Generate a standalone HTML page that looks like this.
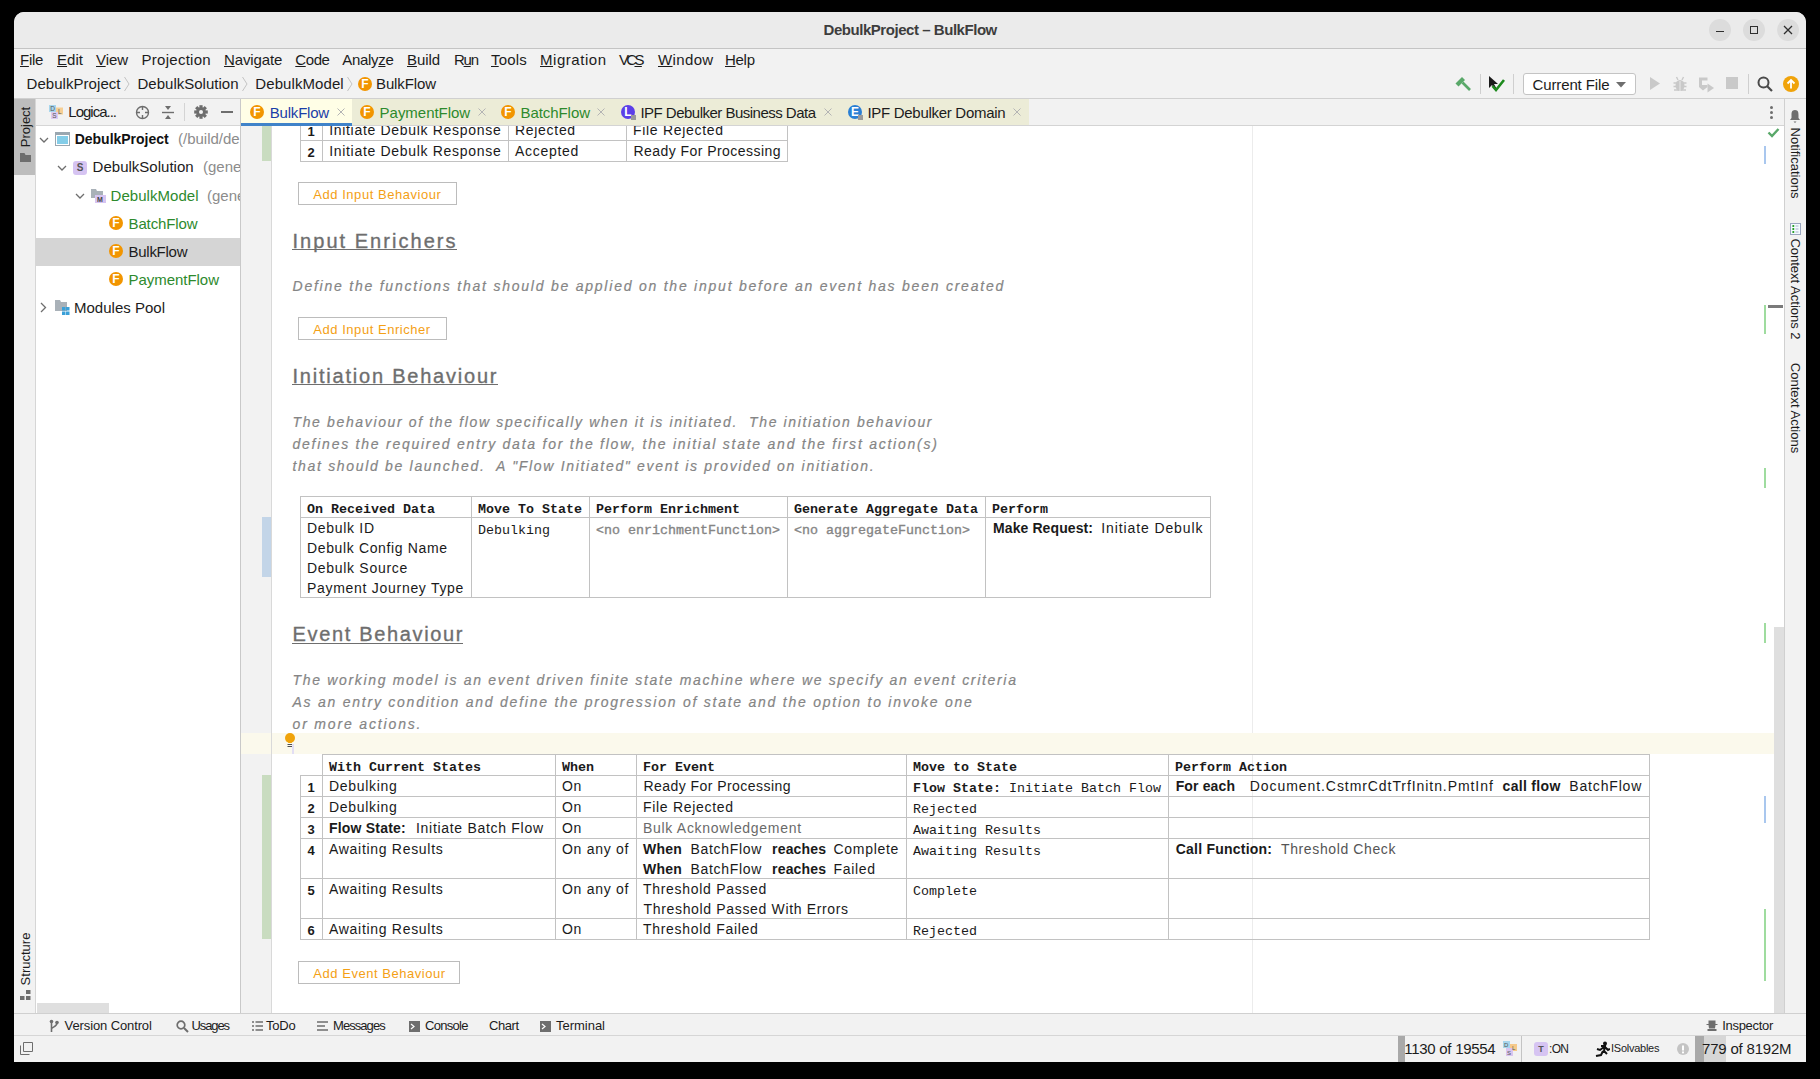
<!DOCTYPE html>
<html><head><meta charset="utf-8"><title>DebulkProject – BulkFlow</title>
<style>
html,body{margin:0;padding:0;background:#000;width:1820px;height:1079px;overflow:hidden}
body{position:relative;font-family:'Liberation Sans',sans-serif}
body>div,body>svg{position:absolute}
.t{white-space:pre;line-height:1}
u{text-decoration:underline;text-underline-offset:1px;text-decoration-thickness:1px}
</style></head><body>
<div style="left:14px;top:12px;width:1792px;height:1050px;background:#f2f2f2;border-radius:10px 10px 0 0;overflow:hidden"></div>
<div style="left:14px;top:12px;width:1792px;height:36px;background:#ebebeb;border-radius:10px 10px 0 0"></div>
<div style="left:14px;top:48px;width:1792px;height:1px;background:#c4c4c4;"></div>
<div class="t" style="left:823.5px;top:22.30px;font-size:15px;color:#3d3d3d;font-weight:700;font-style:normal;font-family:'Liberation Sans', sans-serif;letter-spacing:-0.453px;">DebulkProject – BulkFlow</div>
<div style="left:1709px;top:19px;width:22px;height:22px;border-radius:50%;background:#dcdcdc"></div>
<div style="left:1743px;top:19px;width:22px;height:22px;border-radius:50%;background:#dcdcdc"></div>
<div style="left:1777px;top:19px;width:22px;height:22px;border-radius:50%;background:#dcdcdc"></div>
<div style="left:1716px;top:31px;width:8px;height:1.2px;background:#2e2e2e;"></div>
<div style="left:1750px;top:26px;width:6px;height:6px;border:1.3px solid #2e2e2e"></div>
<svg style="left:1783px;top:25px" width="10" height="10"><path d="M1 1L9 9M9 1L1 9" stroke="#2e2e2e" stroke-width="1.3"/></svg>
<div class="t" style="left:20px;top:51.80px;font-size:15px;color:#1c1c1c;font-weight:400;font-style:normal;font-family:'Liberation Sans', sans-serif;letter-spacing:-0.296px;"><u>F</u>ile</div>
<div class="t" style="left:57px;top:51.80px;font-size:15px;color:#1c1c1c;font-weight:400;font-style:normal;font-family:'Liberation Sans', sans-serif;letter-spacing:0.047px;"><u>E</u>dit</div>
<div class="t" style="left:96px;top:51.80px;font-size:15px;color:#1c1c1c;font-weight:400;font-style:normal;font-family:'Liberation Sans', sans-serif;letter-spacing:-0.083px;"><u>V</u>iew</div>
<div class="t" style="left:141.5px;top:51.80px;font-size:15px;color:#1c1c1c;font-weight:400;font-style:normal;font-family:'Liberation Sans', sans-serif;letter-spacing:0.277px;">Projection</div>
<div class="t" style="left:224px;top:51.80px;font-size:15px;color:#1c1c1c;font-weight:400;font-style:normal;font-family:'Liberation Sans', sans-serif;letter-spacing:-0.117px;"><u>N</u>avigate</div>
<div class="t" style="left:295.3px;top:51.80px;font-size:15px;color:#1c1c1c;font-weight:400;font-style:normal;font-family:'Liberation Sans', sans-serif;letter-spacing:-0.425px;"><u>C</u>ode</div>
<div class="t" style="left:342.3px;top:51.80px;font-size:15px;color:#1c1c1c;font-weight:400;font-style:normal;font-family:'Liberation Sans', sans-serif;letter-spacing:-0.312px;">Analy<u>z</u>e</div>
<div class="t" style="left:407px;top:51.80px;font-size:15px;color:#1c1c1c;font-weight:400;font-style:normal;font-family:'Liberation Sans', sans-serif;letter-spacing:-0.094px;"><u>B</u>uild</div>
<div class="t" style="left:454px;top:51.80px;font-size:15px;color:#1c1c1c;font-weight:400;font-style:normal;font-family:'Liberation Sans', sans-serif;letter-spacing:-1.266px;">R<u>u</u>n</div>
<div class="t" style="left:491px;top:51.80px;font-size:15px;color:#1c1c1c;font-weight:400;font-style:normal;font-family:'Liberation Sans', sans-serif;letter-spacing:0.192px;"><u>T</u>ools</div>
<div class="t" style="left:540px;top:51.80px;font-size:15px;color:#1c1c1c;font-weight:400;font-style:normal;font-family:'Liberation Sans', sans-serif;letter-spacing:0.537px;"><u>M</u>igration</div>
<div class="t" style="left:619px;top:51.80px;font-size:15px;color:#1c1c1c;font-weight:400;font-style:normal;font-family:'Liberation Sans', sans-serif;letter-spacing:-2.68px;">VC<u>S</u></div>
<div class="t" style="left:658px;top:51.80px;font-size:15px;color:#1c1c1c;font-weight:400;font-style:normal;font-family:'Liberation Sans', sans-serif;letter-spacing:0.365px;"><u>W</u>indow</div>
<div class="t" style="left:725px;top:51.80px;font-size:15px;color:#1c1c1c;font-weight:400;font-style:normal;font-family:'Liberation Sans', sans-serif;letter-spacing:-0.292px;"><u>H</u>elp</div>
<div class="t" style="left:26.5px;top:75.80px;font-size:15px;color:#1c1c1c;font-weight:400;font-style:normal;font-family:'Liberation Sans', sans-serif;letter-spacing:0.051px;">DebulkProject</div>
<div class="t" style="left:137.5px;top:75.80px;font-size:15px;color:#1c1c1c;font-weight:400;font-style:normal;font-family:'Liberation Sans', sans-serif;letter-spacing:0.007px;">DebulkSolution</div>
<div class="t" style="left:255.3px;top:75.80px;font-size:15px;color:#1c1c1c;font-weight:400;font-style:normal;font-family:'Liberation Sans', sans-serif;letter-spacing:0.085px;">DebulkModel</div>
<div class="t" style="left:376px;top:75.80px;font-size:15px;color:#1c1c1c;font-weight:400;font-style:normal;font-family:'Liberation Sans', sans-serif;letter-spacing:-0.123px;">BulkFlow</div>
<svg style="left:123px;top:76px" width="8" height="16"><path d="M1.5 1L6 8L1.5 15" stroke="#c4c4c4" stroke-width="1" fill="none"/></svg>
<svg style="left:241px;top:76px" width="8" height="16"><path d="M1.5 1L6 8L1.5 15" stroke="#c4c4c4" stroke-width="1" fill="none"/></svg>
<svg style="left:346px;top:76px" width="8" height="16"><path d="M1.5 1L6 8L1.5 15" stroke="#c4c4c4" stroke-width="1" fill="none"/></svg>
<div style="left:358px;top:77px;width:14px;height:14px;border-radius:50%;background:#f29500"></div>
<div class="t" style="left:358px;top:77px;width:14px;height:14px;line-height:14px;text-align:center;color:#fff;font-weight:700;font-size:12px;font-family:'Liberation Sans', sans-serif">F</div>
<svg style="left:1454px;top:75px" width="18" height="17"><path d="M1.5 8.5L8 2L11 5L4.5 11.5Z" fill="#59a869"/><path d="M8.5 7.5L16 15" stroke="#59a869" stroke-width="2.6"/></svg>
<div style="left:1480px;top:74px;width:1px;height:20px;background:#cfcfcf;"></div>
<svg style="left:1488px;top:75px" width="18" height="18"><path d="M1 1L1 13L4 10L6.5 14.5L8.5 13.5L6 9L10 9Z" fill="#1a1a1a"/><path d="M4.5 11L8 15L16 5" stroke="#1d8a1d" stroke-width="2.6" fill="none"/></svg>
<div style="left:1513px;top:74px;width:1px;height:20px;background:#cfcfcf;"></div>
<div style="left:1523px;top:73px;width:111px;height:20px;border:1px solid #c4c4c4;border-radius:3px;background:#fff"></div>
<div class="t" style="left:1532.5px;top:76.80px;font-size:15px;color:#1c1c1c;font-weight:400;font-style:normal;font-family:'Liberation Sans', sans-serif;letter-spacing:-0.124px;">Current File</div>
<svg style="left:1616px;top:82px" width="10" height="6"><path d="M0 0L10 0L5 5.5Z" fill="#6e6e6e"/></svg>
<svg style="left:1649px;top:76px" width="12" height="15"><path d="M1 1L11 7.5L1 14Z" fill="#c9c9c9"/></svg>
<svg style="left:1672px;top:76px" width="16" height="16"><ellipse cx="8" cy="9.5" rx="4.5" ry="5.5" fill="#c9c9c9"/><path d="M1.5 7H14.5M1.5 10.5H14.5M2 14H14M4.5 1L6 4M11.5 1L10 4" stroke="#c9c9c9" stroke-width="1.4"/><path d="M8 5V15" stroke="#f2f2f2" stroke-width="0.8"/></svg>
<svg style="left:1698px;top:76px" width="17" height="18"><path d="M1 1.5H9.5V4.5H4V9H9.5V11L5 14.5L1 11Z" fill="#c9c9c9"/><path d="M9.5 7.5L16 12L9.5 16.5Z" fill="#c9c9c9"/></svg>
<div style="left:1726px;top:77px;width:12px;height:12px;background:#c9c9c9;"></div>
<div style="left:1748px;top:74px;width:1px;height:20px;background:#cfcfcf;"></div>
<svg style="left:1757px;top:76px" width="16" height="16"><circle cx="6.5" cy="6.5" r="5" stroke="#4a4a4a" stroke-width="2" fill="none"/><path d="M10 10L15 15" stroke="#4a4a4a" stroke-width="2.2"/></svg>
<svg style="left:1783px;top:76px" width="16" height="16"><circle cx="8" cy="8" r="8" fill="#f0a30a"/><path d="M8 12.5L8 4M4.5 7.5L8 4L11.5 7.5" stroke="#fff" stroke-width="1.8" fill="none"/></svg>
<div style="left:14px;top:98px;width:1792px;height:1px;background:#d0d0d0;"></div>
<div style="left:14px;top:99px;width:21px;height:76px;background:#bdbdbd;"></div>
<div style="left:35px;top:99px;width:1px;height:914px;background:#d6d6d6;"></div>
<div class="t" style="left:25.5px;top:126.6px;width:0;height:0"><div style="position:absolute;left:0;top:0;transform:translate(-50%,-50%) rotate(-90deg);font-size:13px;line-height:16px;color:#1c1c1c;white-space:pre">Project</div></div>
<svg style="left:20px;top:153px" width="11" height="9"><path d="M0 0L4.5 0L5.5 2L11 2L11 9L0 9Z" fill="#6e6e6e"/></svg>
<div class="t" style="left:25.5px;top:958.6px;width:0;height:0"><div style="position:absolute;left:0;top:0;transform:translate(-50%,-50%) rotate(-90deg);font-size:13px;line-height:16px;color:#1c1c1c;white-space:pre">Structure</div></div>
<svg style="left:20px;top:990px" width="11" height="10"><rect x="6" y="0" width="4.5" height="4" fill="#6e6e6e"/><rect x="0" y="6" width="4.5" height="4" fill="#6e6e6e"/><rect x="6" y="6" width="4.5" height="4" fill="#6e6e6e"/></svg>
<div style="left:36px;top:99px;width:204px;height:914px;background:#ffffff;"></div>
<div style="left:36px;top:99px;width:204px;height:26px;background:#f2f2f2;"></div>
<div style="left:36px;top:125px;width:204px;height:1px;background:#d6d6d6;"></div>
<div style="left:240px;top:99px;width:1px;height:914px;background:#c9c9c9;"></div>
<svg style="left:49px;top:105px" width="15" height="15"><rect x="0" y="0" width="7" height="7" fill="#a8d6ec"/><rect x="7" y="2.5" width="7" height="7" fill="#f6cf95"/><rect x="2" y="7" width="7" height="7" fill="#dccbf2"/><text x="1.2" y="6.3" font-size="6.5" fill="#555" font-family="Liberation Sans">D</text><text x="9" y="8.5" font-size="6.5" fill="#555" font-family="Liberation Sans">L</text><text x="3.3" y="13.3" font-size="6.5" fill="#555" font-family="Liberation Sans">S</text></svg>
<div class="t" style="left:68.3px;top:104.30px;font-size:15px;color:#1c1c1c;font-weight:400;font-style:normal;font-family:'Liberation Sans', sans-serif;letter-spacing:-1.002px;">Logica...</div>
<svg style="left:135px;top:105px" width="15" height="15"><circle cx="7.5" cy="7.5" r="6" stroke="#6e6e6e" stroke-width="1.4" fill="none"/><path d="M7.5 1V5M7.5 10V14M1 7.5H5M10 7.5H14" stroke="#6e6e6e" stroke-width="1.4"/></svg>
<svg style="left:161px;top:105px" width="14" height="15"><path d="M1 7.5H13" stroke="#6e6e6e" stroke-width="1.4"/><path d="M4 1H10L7 5Z M4 14H10L7 10Z" fill="#6e6e6e"/></svg>
<div style="left:184px;top:103px;width:1px;height:18px;background:#d4d4d4;"></div>
<svg style="left:194px;top:105px" width="14" height="14"><g fill="#6e6e6e" transform="translate(7 7)"><circle r="4.8"/><rect x="-1.6" y="-6.8" width="3.2" height="13.6"/><rect x="-6.8" y="-1.6" width="13.6" height="3.2"/><rect x="-1.6" y="-6.8" width="3.2" height="13.6" transform="rotate(45)"/><rect x="-6.8" y="-1.6" width="13.6" height="3.2" transform="rotate(45)"/></g><circle cx="7" cy="7" r="2" fill="#f2f2f2"/></svg>
<div style="left:221px;top:111px;width:12px;height:2px;background:#6e6e6e;"></div>
<div style="left:36px;top:238px;width:204px;height:28px;background:#d5d5d5;"></div>
<svg style="left:39px;top:137px" width="10" height="7"><path d="M1 1L5 5L9 1" stroke="#6e6e6e" stroke-width="1.3" fill="none"/></svg>
<svg style="left:55px;top:132px" width="15" height="14"><rect x="0.5" y="0.5" width="14" height="13" fill="#fff" stroke="#9aa7b0"/><rect x="1" y="1" width="13" height="2" fill="#9aa7b0"/><rect x="2" y="4" width="11" height="8" fill="#84cde8"/></svg>
<div class="t" style="left:74.7px;top:131.65px;font-size:14px;color:#111111;font-weight:700;font-style:normal;font-family:'Liberation Sans', sans-serif;letter-spacing:-0.012px;">DebulkProject</div>
<div class="t" style="left:178px;top:131.30px;font-size:15px;color:#8c8c8c;font-weight:400;font-style:normal;font-family:'Liberation Sans', sans-serif;letter-spacing:0px;">(/build/de</div>
<svg style="left:57px;top:165px" width="10" height="7"><path d="M1 1L5 5L9 1" stroke="#6e6e6e" stroke-width="1.3" fill="none"/></svg>
<div style="left:73px;top:161px;width:14px;height:14px;border-radius:3px;background:#d6c4f2"></div>
<div class="t" style="left:73px;top:161px;width:14px;height:14px;line-height:14px;text-align:center;font-size:10px;color:#555;font-weight:700">S</div>
<div class="t" style="left:92.6px;top:159.30px;font-size:15px;color:#1c1c1c;font-weight:400;font-style:normal;font-family:'Liberation Sans', sans-serif;letter-spacing:0.007px;">DebulkSolution</div>
<div class="t" style="left:203px;top:159.30px;font-size:15px;color:#8c8c8c;font-weight:400;font-style:normal;font-family:'Liberation Sans', sans-serif;letter-spacing:0px;">(gene</div>
<svg style="left:75px;top:193px" width="10" height="7"><path d="M1 1L5 5L9 1" stroke="#6e6e6e" stroke-width="1.3" fill="none"/></svg>
<svg style="left:91px;top:189px" width="15" height="14"><path d="M0 0H5L6 2H12V9H0Z" fill="#a9b1b8"/><rect x="4" y="6" width="11" height="8" fill="#d6c4f2"/><text x="6" y="13" font-size="7" fill="#444" font-family="Liberation Sans" font-weight="bold">M</text></svg>
<div class="t" style="left:110.5px;top:187.80px;font-size:15px;color:#2d8a2d;font-weight:400;font-style:normal;font-family:'Liberation Sans', sans-serif;letter-spacing:0.045px;">DebulkModel</div>
<div class="t" style="left:207px;top:187.80px;font-size:15px;color:#8c8c8c;font-weight:400;font-style:normal;font-family:'Liberation Sans', sans-serif;letter-spacing:0px;">(gene</div>
<div style="left:109px;top:216px;width:14px;height:14px;border-radius:50%;background:#f29500"></div>
<div class="t" style="left:109px;top:216px;width:14px;height:14px;line-height:14px;text-align:center;color:#fff;font-weight:700;font-size:12px;font-family:'Liberation Sans', sans-serif">F</div>
<div class="t" style="left:128.5px;top:215.80px;font-size:15px;color:#2d8a2d;font-weight:400;font-style:normal;font-family:'Liberation Sans', sans-serif;letter-spacing:-0.129px;">BatchFlow</div>
<div style="left:109px;top:244px;width:14px;height:14px;border-radius:50%;background:#f29500"></div>
<div class="t" style="left:109px;top:244px;width:14px;height:14px;line-height:14px;text-align:center;color:#fff;font-weight:700;font-size:12px;font-family:'Liberation Sans', sans-serif">F</div>
<div class="t" style="left:128.5px;top:243.80px;font-size:15px;color:#1c1c1c;font-weight:400;font-style:normal;font-family:'Liberation Sans', sans-serif;letter-spacing:-0.266px;">BulkFlow</div>
<div style="left:109px;top:272px;width:14px;height:14px;border-radius:50%;background:#f29500"></div>
<div class="t" style="left:109px;top:272px;width:14px;height:14px;line-height:14px;text-align:center;color:#fff;font-weight:700;font-size:12px;font-family:'Liberation Sans', sans-serif">F</div>
<div class="t" style="left:128.5px;top:271.80px;font-size:15px;color:#2d8a2d;font-weight:400;font-style:normal;font-family:'Liberation Sans', sans-serif;letter-spacing:-0.037px;">PaymentFlow</div>
<svg style="left:40px;top:302px" width="7" height="11"><path d="M1 1L5.5 5.5L1 10" stroke="#6e6e6e" stroke-width="1.3" fill="none"/></svg>
<svg style="left:55px;top:300px" width="15" height="16"><path d="M0 0H5L6 2H12V11H0Z" fill="#a9b1b8"/><rect x="7" y="7" width="3.5" height="3.5" fill="#3aa0d8"/><rect x="11" y="7" width="3.5" height="3.5" fill="#3aa0d8"/><rect x="7" y="11.5" width="3.5" height="3.5" fill="#3aa0d8"/><rect x="11" y="11.5" width="3.5" height="3.5" fill="#3aa0d8"/></svg>
<div class="t" style="left:74px;top:300.30px;font-size:15px;color:#1c1c1c;font-weight:400;font-style:normal;font-family:'Liberation Sans', sans-serif;letter-spacing:0.01px;">Modules Pool</div>
<div style="left:37px;top:1003px;width:72px;height:10px;background:#dfdfdf;"></div>
<div style="left:240px;top:126px;width:1px;height:887px;background:#c9c9c9;"></div>
<div style="left:241px;top:126px;width:30px;height:887px;background:#f2f2f2;"></div>
<div style="left:271px;top:126px;width:1px;height:887px;background:#d9d9d9;"></div>
<div style="left:262px;top:126px;width:9px;height:35px;background:#c9dcc0;"></div>
<div style="left:262px;top:517px;width:9px;height:60px;background:#c3d5e8;"></div>
<div style="left:262px;top:775px;width:9px;height:164px;background:#c9dcc0;"></div>
<div style="left:272px;top:126px;width:1512px;height:887px;background:#ffffff;"></div>
<div style="left:1252px;top:126px;width:1px;height:887px;background:#ececec;"></div>
<div style="left:241px;top:733px;width:30px;height:21px;background:#fbf9ec;"></div>
<div style="left:272px;top:733px;width:1512px;height:21px;background:#fbf9ec;"></div>
<div style="left:300px;top:118px;width:1px;height:44px;background:#c2c2c2;"></div>
<div style="left:322px;top:118px;width:1px;height:44px;background:#c2c2c2;"></div>
<div style="left:508px;top:118px;width:1px;height:44px;background:#c2c2c2;"></div>
<div style="left:626px;top:118px;width:1px;height:44px;background:#c2c2c2;"></div>
<div style="left:787px;top:118px;width:1px;height:44px;background:#c2c2c2;"></div>
<div style="left:300px;top:118px;width:488px;height:1px;background:#c2c2c2;"></div>
<div style="left:300px;top:140px;width:488px;height:1px;background:#c2c2c2;"></div>
<div style="left:300px;top:161px;width:488px;height:1px;background:#c2c2c2;"></div>
<div class="t" style="left:301px;top:124.50px;width:20px;text-align:center;font-size:13px;font-weight:700;color:#1a1a1a">1</div>
<div class="t" style="left:301px;top:145.50px;width:20px;text-align:center;font-size:13px;font-weight:700;color:#1a1a1a">2</div>
<div class="t" style="left:329.2px;top:123.15px;font-size:14px;color:#1a1a1a;font-weight:400;font-style:normal;font-family:'Liberation Sans', sans-serif;letter-spacing:0.689px;">Initiate Debulk Response</div>
<div class="t" style="left:515px;top:123.15px;font-size:14px;color:#1a1a1a;font-weight:400;font-style:normal;font-family:'Liberation Sans', sans-serif;letter-spacing:0.7px;">Rejected</div>
<div class="t" style="left:633px;top:123.15px;font-size:14px;color:#1a1a1a;font-weight:400;font-style:normal;font-family:'Liberation Sans', sans-serif;letter-spacing:0.7px;">File Rejected</div>
<div class="t" style="left:329.2px;top:144.15px;font-size:14px;color:#1a1a1a;font-weight:400;font-style:normal;font-family:'Liberation Sans', sans-serif;letter-spacing:0.689px;">Initiate Debulk Response</div>
<div class="t" style="left:515px;top:144.15px;font-size:14px;color:#1a1a1a;font-weight:400;font-style:normal;font-family:'Liberation Sans', sans-serif;letter-spacing:0.7px;">Accepted</div>
<div class="t" style="left:633.5px;top:144.15px;font-size:14px;color:#1a1a1a;font-weight:400;font-style:normal;font-family:'Liberation Sans', sans-serif;letter-spacing:0.447px;">Ready For Processing</div>
<div style="left:298px;top:182px;width:157px;height:21px;border:1px solid #bcbcbc;background:#fff;"></div>
<div class="t" style="left:313.3px;top:188.00px;font-size:13px;color:#f4a015;font-weight:400;font-style:normal;font-family:'Liberation Sans', sans-serif;letter-spacing:0.54px;">Add Input Behaviour</div>
<div class="t" style="left:292.5px;top:230.57px;font-size:20px;color:#6e6e6e;font-weight:400;font-style:normal;font-family:'Liberation Sans', sans-serif;letter-spacing:2.035px;-webkit-text-stroke:0.35px #6e6e6e">Input Enrichers</div>
<div style="left:292px;top:249px;width:165px;height:1px;background:#6e6e6e;"></div>
<div class="t" style="left:292.5px;top:279.15px;font-size:14px;color:#858585;font-weight:400;font-style:italic;font-family:'Liberation Sans', sans-serif;letter-spacing:1.77px;-webkit-text-stroke:0.2px #858585">Define the functions that should be applied on the input before an event has been created</div>
<div style="left:298px;top:317px;width:147px;height:21px;border:1px solid #bcbcbc;background:#fff;"></div>
<div class="t" style="left:313.3px;top:323.00px;font-size:13px;color:#f4a015;font-weight:400;font-style:normal;font-family:'Liberation Sans', sans-serif;letter-spacing:0.54px;">Add Input Enricher</div>
<div class="t" style="left:292.5px;top:365.57px;font-size:20px;color:#6e6e6e;font-weight:400;font-style:normal;font-family:'Liberation Sans', sans-serif;letter-spacing:1.784px;-webkit-text-stroke:0.35px #6e6e6e">Initiation Behaviour</div>
<div style="left:292px;top:384px;width:206px;height:1px;background:#6e6e6e;"></div>
<div class="t" style="left:292.5px;top:414.65px;font-size:14px;color:#858585;font-weight:400;font-style:italic;font-family:'Liberation Sans', sans-serif;letter-spacing:1.64px;-webkit-text-stroke:0.2px #858585">The behaviour of the flow specifically when it is initiated.  The initiation behaviour</div>
<div class="t" style="left:292.5px;top:436.65px;font-size:14px;color:#858585;font-weight:400;font-style:italic;font-family:'Liberation Sans', sans-serif;letter-spacing:1.756px;-webkit-text-stroke:0.2px #858585">defines the required entry data for the flow, the initial state and the first action(s)</div>
<div class="t" style="left:292.5px;top:458.65px;font-size:14px;color:#858585;font-weight:400;font-style:italic;font-family:'Liberation Sans', sans-serif;letter-spacing:1.683px;-webkit-text-stroke:0.2px #858585">that should be launched.  A "Flow Initiated" event is provided on initiation.</div>
<div style="left:300px;top:496px;width:1px;height:102px;background:#c2c2c2;"></div>
<div style="left:471px;top:496px;width:1px;height:102px;background:#c2c2c2;"></div>
<div style="left:589px;top:496px;width:1px;height:102px;background:#c2c2c2;"></div>
<div style="left:787px;top:496px;width:1px;height:102px;background:#c2c2c2;"></div>
<div style="left:985px;top:496px;width:1px;height:102px;background:#c2c2c2;"></div>
<div style="left:1210px;top:496px;width:1px;height:102px;background:#c2c2c2;"></div>
<div style="left:300px;top:496px;width:911px;height:1px;background:#c2c2c2;"></div>
<div style="left:300px;top:517px;width:911px;height:1px;background:#c2c2c2;"></div>
<div style="left:300px;top:597px;width:911px;height:1px;background:#c2c2c2;"></div>
<div class="t" style="left:307px;top:503.28px;font-size:13.33px;color:#1a1a1a;font-weight:700;font-style:normal;font-family:'Liberation Mono', monospace;letter-spacing:0px;">On Received Data</div>
<div class="t" style="left:478px;top:503.28px;font-size:13.33px;color:#1a1a1a;font-weight:700;font-style:normal;font-family:'Liberation Mono', monospace;letter-spacing:0px;">Move To State</div>
<div class="t" style="left:596px;top:503.28px;font-size:13.33px;color:#1a1a1a;font-weight:700;font-style:normal;font-family:'Liberation Mono', monospace;letter-spacing:0px;">Perform Enrichment</div>
<div class="t" style="left:794px;top:503.28px;font-size:13.33px;color:#1a1a1a;font-weight:700;font-style:normal;font-family:'Liberation Mono', monospace;letter-spacing:0px;">Generate Aggregate Data</div>
<div class="t" style="left:992px;top:503.28px;font-size:13.33px;color:#1a1a1a;font-weight:700;font-style:normal;font-family:'Liberation Mono', monospace;letter-spacing:0px;">Perform</div>
<div class="t" style="left:307px;top:521.15px;font-size:14px;color:#1a1a1a;font-weight:400;font-style:normal;font-family:'Liberation Sans', sans-serif;letter-spacing:0.7px;">Debulk ID</div>
<div class="t" style="left:307px;top:541.15px;font-size:14px;color:#1a1a1a;font-weight:400;font-style:normal;font-family:'Liberation Sans', sans-serif;letter-spacing:0.637px;">Debulk Config Name</div>
<div class="t" style="left:307px;top:561.15px;font-size:14px;color:#1a1a1a;font-weight:400;font-style:normal;font-family:'Liberation Sans', sans-serif;letter-spacing:0.7px;">Debulk Source</div>
<div class="t" style="left:307px;top:581.15px;font-size:14px;color:#1a1a1a;font-weight:400;font-style:normal;font-family:'Liberation Sans', sans-serif;letter-spacing:0.709px;">Payment Journey Type</div>
<div class="t" style="left:478px;top:524.28px;font-size:13.33px;color:#1a1a1a;font-weight:400;font-style:normal;font-family:'Liberation Mono', monospace;letter-spacing:0px;">Debulking</div>
<div class="t" style="left:596px;top:524.28px;font-size:13.33px;color:#858585;font-weight:400;font-style:normal;font-family:'Liberation Mono', monospace;letter-spacing:0px;-webkit-text-stroke:0.35px #858585">&lt;no enrichmentFunction&gt;</div>
<div class="t" style="left:794px;top:524.28px;font-size:13.33px;color:#858585;font-weight:400;font-style:normal;font-family:'Liberation Mono', monospace;letter-spacing:0px;-webkit-text-stroke:0.35px #858585">&lt;no aggregateFunction&gt;</div>
<div class="t" style="left:993px;top:520.65px;font-size:14px;color:#1a1a1a;font-weight:700;font-style:normal;font-family:'Liberation Sans', sans-serif;letter-spacing:0.099px;">Make Request:</div>
<div class="t" style="left:1101.2px;top:520.65px;font-size:14px;color:#1a1a1a;font-weight:400;font-style:normal;font-family:'Liberation Sans', sans-serif;letter-spacing:0.899px;">Initiate Debulk</div>
<div class="t" style="left:292.5px;top:624.07px;font-size:20px;color:#6e6e6e;font-weight:400;font-style:normal;font-family:'Liberation Sans', sans-serif;letter-spacing:1.66px;-webkit-text-stroke:0.35px #6e6e6e">Event Behaviour</div>
<div style="left:292px;top:643px;width:171px;height:1px;background:#6e6e6e;"></div>
<div class="t" style="left:292.5px;top:672.65px;font-size:14px;color:#858585;font-weight:400;font-style:italic;font-family:'Liberation Sans', sans-serif;letter-spacing:1.673px;-webkit-text-stroke:0.2px #858585">The working model is an event driven finite state machine where we specify an event criteria</div>
<div class="t" style="left:292.5px;top:694.65px;font-size:14px;color:#858585;font-weight:400;font-style:italic;font-family:'Liberation Sans', sans-serif;letter-spacing:1.757px;-webkit-text-stroke:0.2px #858585">As an entry condition and define the progression of state and the option to invoke one</div>
<div class="t" style="left:292.5px;top:716.65px;font-size:14px;color:#858585;font-weight:400;font-style:italic;font-family:'Liberation Sans', sans-serif;letter-spacing:1.842px;-webkit-text-stroke:0.2px #858585">or more actions.</div>
<svg style="left:284px;top:733px" width="12" height="16"><circle cx="6" cy="5" r="5" fill="#f0a30a"/><path d="M3.5 8H8.5L7.5 10H4.5Z" fill="#f0a30a"/><path d="M3.5 11.5H8.5M3.5 13.5H8.5" stroke="#505050" stroke-width="1"/></svg>
<div style="left:292px;top:744px;width:2px;height:10px;background:#e2def4;"></div>
<div style="left:322px;top:754px;width:1px;height:186px;background:#c2c2c2;"></div>
<div style="left:555px;top:754px;width:1px;height:186px;background:#c2c2c2;"></div>
<div style="left:636px;top:754px;width:1px;height:186px;background:#c2c2c2;"></div>
<div style="left:906px;top:754px;width:1px;height:186px;background:#c2c2c2;"></div>
<div style="left:1168px;top:754px;width:1px;height:186px;background:#c2c2c2;"></div>
<div style="left:1649px;top:754px;width:1px;height:186px;background:#c2c2c2;"></div>
<div style="left:300px;top:775px;width:1px;height:165px;background:#c2c2c2;"></div>
<div style="left:322px;top:754px;width:1328px;height:1px;background:#c2c2c2;"></div>
<div style="left:300px;top:775px;width:1350px;height:1px;background:#c2c2c2;"></div>
<div style="left:300px;top:796px;width:1350px;height:1px;background:#c2c2c2;"></div>
<div style="left:300px;top:817px;width:1350px;height:1px;background:#c2c2c2;"></div>
<div style="left:300px;top:838px;width:1350px;height:1px;background:#c2c2c2;"></div>
<div style="left:300px;top:878px;width:1350px;height:1px;background:#c2c2c2;"></div>
<div style="left:300px;top:918px;width:1350px;height:1px;background:#c2c2c2;"></div>
<div style="left:300px;top:939px;width:1350px;height:1px;background:#c2c2c2;"></div>
<div class="t" style="left:329px;top:761.28px;font-size:13.33px;color:#1a1a1a;font-weight:700;font-style:normal;font-family:'Liberation Mono', monospace;letter-spacing:0px;">With Current States</div>
<div class="t" style="left:562px;top:761.28px;font-size:13.33px;color:#1a1a1a;font-weight:700;font-style:normal;font-family:'Liberation Mono', monospace;letter-spacing:0px;">When</div>
<div class="t" style="left:643px;top:761.28px;font-size:13.33px;color:#1a1a1a;font-weight:700;font-style:normal;font-family:'Liberation Mono', monospace;letter-spacing:0px;">For Event</div>
<div class="t" style="left:913px;top:761.28px;font-size:13.33px;color:#1a1a1a;font-weight:700;font-style:normal;font-family:'Liberation Mono', monospace;letter-spacing:0px;">Move to State</div>
<div class="t" style="left:1175px;top:761.28px;font-size:13.33px;color:#1a1a1a;font-weight:700;font-style:normal;font-family:'Liberation Mono', monospace;letter-spacing:0px;">Perform Action</div>
<div class="t" style="left:301px;top:781.00px;width:20px;text-align:center;font-size:13px;font-weight:700;color:#1a1a1a">1</div>
<div class="t" style="left:301px;top:802.00px;width:20px;text-align:center;font-size:13px;font-weight:700;color:#1a1a1a">2</div>
<div class="t" style="left:301px;top:823.00px;width:20px;text-align:center;font-size:13px;font-weight:700;color:#1a1a1a">3</div>
<div class="t" style="left:301px;top:844.00px;width:20px;text-align:center;font-size:13px;font-weight:700;color:#1a1a1a">4</div>
<div class="t" style="left:301px;top:884.00px;width:20px;text-align:center;font-size:13px;font-weight:700;color:#1a1a1a">5</div>
<div class="t" style="left:301px;top:924.00px;width:20px;text-align:center;font-size:13px;font-weight:700;color:#1a1a1a">6</div>
<div class="t" style="left:329px;top:778.65px;font-size:14px;color:#1a1a1a;font-weight:400;font-style:normal;font-family:'Liberation Sans', sans-serif;letter-spacing:0.7px;">Debulking</div>
<div class="t" style="left:562px;top:778.65px;font-size:14px;color:#1a1a1a;font-weight:400;font-style:normal;font-family:'Liberation Sans', sans-serif;letter-spacing:0.7px;">On</div>
<div class="t" style="left:643.5px;top:778.65px;font-size:14px;color:#1a1a1a;font-weight:400;font-style:normal;font-family:'Liberation Sans', sans-serif;letter-spacing:0.447px;">Ready For Processing</div>
<div class="t" style="left:913px;top:782.28px;font-size:13.33px;color:#1a1a1a;font-weight:700;font-style:normal;font-family:'Liberation Mono', monospace;letter-spacing:0px;">Flow State:</div>
<div class="t" style="left:1009px;top:782.28px;font-size:13.33px;color:#1a1a1a;font-weight:400;font-style:normal;font-family:'Liberation Mono', monospace;letter-spacing:0px;">Initiate Batch Flow</div>
<div class="t" style="left:1175.7px;top:778.65px;font-size:14px;color:#1a1a1a;font-weight:700;font-style:normal;font-family:'Liberation Sans', sans-serif;letter-spacing:0.134px;">For each</div>
<div class="t" style="left:1249.8px;top:778.65px;font-size:14px;color:#1a1a1a;font-weight:400;font-style:normal;font-family:'Liberation Sans', sans-serif;letter-spacing:0.929px;">Document.CstmrCdtTrfInitn.PmtInf</div>
<div class="t" style="left:1502.6px;top:778.65px;font-size:14px;color:#1a1a1a;font-weight:700;font-style:normal;font-family:'Liberation Sans', sans-serif;letter-spacing:0.308px;">call flow</div>
<div class="t" style="left:1569.3px;top:778.65px;font-size:14px;color:#1a1a1a;font-weight:400;font-style:normal;font-family:'Liberation Sans', sans-serif;letter-spacing:0.83px;">BatchFlow</div>
<div class="t" style="left:329px;top:799.65px;font-size:14px;color:#1a1a1a;font-weight:400;font-style:normal;font-family:'Liberation Sans', sans-serif;letter-spacing:0.7px;">Debulking</div>
<div class="t" style="left:562px;top:799.65px;font-size:14px;color:#1a1a1a;font-weight:400;font-style:normal;font-family:'Liberation Sans', sans-serif;letter-spacing:0.7px;">On</div>
<div class="t" style="left:643px;top:799.65px;font-size:14px;color:#1a1a1a;font-weight:400;font-style:normal;font-family:'Liberation Sans', sans-serif;letter-spacing:0.7px;">File Rejected</div>
<div class="t" style="left:913px;top:803.28px;font-size:13.33px;color:#1a1a1a;font-weight:400;font-style:normal;font-family:'Liberation Mono', monospace;letter-spacing:0px;">Rejected</div>
<div class="t" style="left:329px;top:820.65px;font-size:14px;color:#1a1a1a;font-weight:700;font-style:normal;font-family:'Liberation Sans', sans-serif;letter-spacing:0.2px;">Flow State:</div>
<div class="t" style="left:416px;top:820.65px;font-size:14px;color:#1a1a1a;font-weight:400;font-style:normal;font-family:'Liberation Sans', sans-serif;letter-spacing:0.7px;">Initiate Batch Flow</div>
<div class="t" style="left:562px;top:820.65px;font-size:14px;color:#1a1a1a;font-weight:400;font-style:normal;font-family:'Liberation Sans', sans-serif;letter-spacing:0.7px;">On</div>
<div class="t" style="left:643px;top:820.65px;font-size:14px;color:#6a6a6a;font-weight:400;font-style:normal;font-family:'Liberation Sans', sans-serif;letter-spacing:0.7px;">Bulk Acknowledgement</div>
<div class="t" style="left:913px;top:824.28px;font-size:13.33px;color:#1a1a1a;font-weight:400;font-style:normal;font-family:'Liberation Mono', monospace;letter-spacing:0px;">Awaiting Results</div>
<div class="t" style="left:329px;top:841.65px;font-size:14px;color:#1a1a1a;font-weight:400;font-style:normal;font-family:'Liberation Sans', sans-serif;letter-spacing:0.7px;">Awaiting Results</div>
<div class="t" style="left:562px;top:841.65px;font-size:14px;color:#1a1a1a;font-weight:400;font-style:normal;font-family:'Liberation Sans', sans-serif;letter-spacing:0.7px;">On any of</div>
<div class="t" style="left:643px;top:841.65px;font-size:14px;color:#1a1a1a;font-weight:700;font-style:normal;font-family:'Liberation Sans', sans-serif;letter-spacing:0.2px;">When</div>
<div class="t" style="left:690.5px;top:841.65px;font-size:14px;color:#1a1a1a;font-weight:400;font-style:normal;font-family:'Liberation Sans', sans-serif;letter-spacing:0.7px;">BatchFlow</div>
<div class="t" style="left:772px;top:841.65px;font-size:14px;color:#1a1a1a;font-weight:700;font-style:normal;font-family:'Liberation Sans', sans-serif;letter-spacing:0.2px;">reaches</div>
<div class="t" style="left:833.5px;top:841.65px;font-size:14px;color:#1a1a1a;font-weight:400;font-style:normal;font-family:'Liberation Sans', sans-serif;letter-spacing:0.7px;">Complete</div>
<div class="t" style="left:643px;top:861.65px;font-size:14px;color:#1a1a1a;font-weight:700;font-style:normal;font-family:'Liberation Sans', sans-serif;letter-spacing:0.2px;">When</div>
<div class="t" style="left:690.5px;top:861.65px;font-size:14px;color:#1a1a1a;font-weight:400;font-style:normal;font-family:'Liberation Sans', sans-serif;letter-spacing:0.7px;">BatchFlow</div>
<div class="t" style="left:772px;top:861.65px;font-size:14px;color:#1a1a1a;font-weight:700;font-style:normal;font-family:'Liberation Sans', sans-serif;letter-spacing:0.2px;">reaches</div>
<div class="t" style="left:833.5px;top:861.65px;font-size:14px;color:#1a1a1a;font-weight:400;font-style:normal;font-family:'Liberation Sans', sans-serif;letter-spacing:0.7px;">Failed</div>
<div class="t" style="left:913px;top:845.28px;font-size:13.33px;color:#1a1a1a;font-weight:400;font-style:normal;font-family:'Liberation Mono', monospace;letter-spacing:0px;">Awaiting Results</div>
<div class="t" style="left:1175.7px;top:841.65px;font-size:14px;color:#1a1a1a;font-weight:700;font-style:normal;font-family:'Liberation Sans', sans-serif;letter-spacing:0.229px;">Call Function:</div>
<div class="t" style="left:1281px;top:841.65px;font-size:14px;color:#555555;font-weight:400;font-style:normal;font-family:'Liberation Sans', sans-serif;letter-spacing:0.619px;">Threshold Check</div>
<div class="t" style="left:329px;top:881.65px;font-size:14px;color:#1a1a1a;font-weight:400;font-style:normal;font-family:'Liberation Sans', sans-serif;letter-spacing:0.7px;">Awaiting Results</div>
<div class="t" style="left:562px;top:881.65px;font-size:14px;color:#1a1a1a;font-weight:400;font-style:normal;font-family:'Liberation Sans', sans-serif;letter-spacing:0.7px;">On any of</div>
<div class="t" style="left:643px;top:881.65px;font-size:14px;color:#1a1a1a;font-weight:400;font-style:normal;font-family:'Liberation Sans', sans-serif;letter-spacing:0.7px;">Threshold Passed</div>
<div class="t" style="left:643.6px;top:901.65px;font-size:14px;color:#1a1a1a;font-weight:400;font-style:normal;font-family:'Liberation Sans', sans-serif;letter-spacing:0.658px;">Threshold Passed With Errors</div>
<div class="t" style="left:913px;top:885.28px;font-size:13.33px;color:#1a1a1a;font-weight:400;font-style:normal;font-family:'Liberation Mono', monospace;letter-spacing:0px;">Complete</div>
<div class="t" style="left:329px;top:921.65px;font-size:14px;color:#1a1a1a;font-weight:400;font-style:normal;font-family:'Liberation Sans', sans-serif;letter-spacing:0.7px;">Awaiting Results</div>
<div class="t" style="left:562px;top:921.65px;font-size:14px;color:#1a1a1a;font-weight:400;font-style:normal;font-family:'Liberation Sans', sans-serif;letter-spacing:0.7px;">On</div>
<div class="t" style="left:643px;top:921.65px;font-size:14px;color:#1a1a1a;font-weight:400;font-style:normal;font-family:'Liberation Sans', sans-serif;letter-spacing:0.7px;">Threshold Failed</div>
<div class="t" style="left:913px;top:925.28px;font-size:13.33px;color:#1a1a1a;font-weight:400;font-style:normal;font-family:'Liberation Mono', monospace;letter-spacing:0px;">Rejected</div>
<div style="left:298px;top:961px;width:160px;height:21px;border:1px solid #bcbcbc;background:#fff;"></div>
<div class="t" style="left:313.3px;top:966.50px;font-size:13px;color:#f4a015;font-weight:400;font-style:normal;font-family:'Liberation Sans', sans-serif;letter-spacing:0.54px;">Add Event Behaviour</div>
<div style="left:1764px;top:146px;width:2px;height:18px;background:#a9c7ee;"></div>
<div style="left:1764px;top:305px;width:2px;height:29px;background:#9fdc9f;"></div>
<div style="left:1768px;top:305px;width:15px;height:3px;background:#7a7a7a;"></div>
<div style="left:1764px;top:468px;width:2px;height:20px;background:#9fdc9f;"></div>
<div style="left:1764px;top:623px;width:2px;height:20px;background:#9fdc9f;"></div>
<div style="left:1764px;top:796px;width:2px;height:27px;background:#a9c7ee;"></div>
<div style="left:1764px;top:909px;width:2px;height:72px;background:#9fdc9f;"></div>
<svg style="left:1767px;top:127px" width="13" height="11"><path d="M1.5 5.5L5 9L11.5 2" stroke="#59a869" stroke-width="2.4" fill="none"/></svg>
<div style="left:1774px;top:627px;width:10px;height:386px;background:#dfdfdf;"></div>
<div style="left:241px;top:99px;width:1543px;height:26px;background:#f2f2f2;"></div>
<div style="left:241px;top:125px;width:1543px;height:1px;background:#d4d4d4;"></div>
<div style="left:352px;top:99px;width:677px;height:26px;background:#ececd7;"></div>
<div style="left:241px;top:99px;width:111px;height:26px;background:#fffee6;"></div>
<div style="left:241px;top:123px;width:111px;height:3px;background:#4083c9;"></div>
<div style="left:250px;top:105px;width:14px;height:14px;border-radius:50%;background:#f29500"></div>
<div class="t" style="left:250px;top:105px;width:14px;height:14px;line-height:14px;text-align:center;color:#fff;font-weight:700;font-size:12px;font-family:'Liberation Sans', sans-serif">F</div>
<div class="t" style="left:269.8px;top:105.30px;font-size:15px;color:#1b3ea8;font-weight:400;font-style:normal;font-family:'Liberation Sans', sans-serif;letter-spacing:-0.208px;">BulkFlow</div>
<svg style="left:337px;top:108px" width="8" height="8"><path d="M0.5 0.5L7.5 7.5M7.5 0.5L0.5 7.5" stroke="#b4b4b4" stroke-width="1"/></svg>
<div style="left:360px;top:105px;width:14px;height:14px;border-radius:50%;background:#f29500"></div>
<div class="t" style="left:360px;top:105px;width:14px;height:14px;line-height:14px;text-align:center;color:#fff;font-weight:700;font-size:12px;font-family:'Liberation Sans', sans-serif">F</div>
<div class="t" style="left:379.6px;top:105.30px;font-size:15px;color:#2d8a2d;font-weight:400;font-style:normal;font-family:'Liberation Sans', sans-serif;letter-spacing:-0.028px;">PaymentFlow</div>
<svg style="left:478px;top:108px" width="8" height="8"><path d="M0.5 0.5L7.5 7.5M7.5 0.5L0.5 7.5" stroke="#b4b4b4" stroke-width="1"/></svg>
<div style="left:501px;top:105px;width:14px;height:14px;border-radius:50%;background:#f29500"></div>
<div class="t" style="left:501px;top:105px;width:14px;height:14px;line-height:14px;text-align:center;color:#fff;font-weight:700;font-size:12px;font-family:'Liberation Sans', sans-serif">F</div>
<div class="t" style="left:520.5px;top:105.30px;font-size:15px;color:#2d8a2d;font-weight:400;font-style:normal;font-family:'Liberation Sans', sans-serif;letter-spacing:-0.066px;">BatchFlow</div>
<svg style="left:597px;top:108px" width="8" height="8"><path d="M0.5 0.5L7.5 7.5M7.5 0.5L0.5 7.5" stroke="#b4b4b4" stroke-width="1"/></svg>
<div style="left:621px;top:105px;width:14px;height:14px;border-radius:50%;background:#5b3fe8"></div>
<div class="t" style="left:621px;top:105px;width:14px;height:14px;line-height:14px;text-align:center;color:#fff;font-weight:700;font-size:12px;font-family:'Liberation Sans', sans-serif">L</div>
<div style="left:631px;top:115px;width:5px;height:5px;background:#9a9a9a;"></div>
<div class="t" style="left:640.4px;top:105.30px;font-size:15px;color:#1c1c1c;font-weight:400;font-style:normal;font-family:'Liberation Sans', sans-serif;letter-spacing:-0.513px;">IPF Debulker Business Data</div>
<svg style="left:824px;top:108px" width="8" height="8"><path d="M0.5 0.5L7.5 7.5M7.5 0.5L0.5 7.5" stroke="#b4b4b4" stroke-width="1"/></svg>
<div style="left:848px;top:105px;width:14px;height:14px;border-radius:50%;background:#2a7fd4"></div>
<div class="t" style="left:848px;top:105px;width:14px;height:14px;line-height:14px;text-align:center;color:#fff;font-weight:700;font-size:12px;font-family:'Liberation Sans', sans-serif">E</div>
<div style="left:858px;top:115px;width:5px;height:5px;background:#9a9a9a;"></div>
<div class="t" style="left:867.4px;top:105.30px;font-size:15px;color:#1c1c1c;font-weight:400;font-style:normal;font-family:'Liberation Sans', sans-serif;letter-spacing:-0.288px;">IPF Debulker Domain</div>
<svg style="left:1013px;top:108px" width="8" height="8"><path d="M0.5 0.5L7.5 7.5M7.5 0.5L0.5 7.5" stroke="#b4b4b4" stroke-width="1"/></svg>
<div style="left:1770px;top:106.0px;width:3px;height:3px;border-radius:50%;background:#6e6e6e"></div>
<div style="left:1770px;top:110.8px;width:3px;height:3px;border-radius:50%;background:#6e6e6e"></div>
<div style="left:1770px;top:115.5px;width:3px;height:3px;border-radius:50%;background:#6e6e6e"></div>
<div style="left:1784px;top:99px;width:1px;height:914px;background:#d0d0d0;"></div>
<div style="left:1785px;top:99px;width:21px;height:914px;background:#f2f2f2;"></div>
<svg style="left:1789px;top:109px" width="12" height="14"><path d="M6 1C2.5 1 2.5 4 2.5 6L2.5 9L1 11H11L9.5 9L9.5 6C9.5 4 9.5 1 6 1Z" fill="#6e6e6e"/><path d="M4.5 12.5H7.5L6 14Z" fill="#6e6e6e"/></svg>
<div class="t" style="left:1795px;top:162.8px;width:0;height:0"><div style="position:absolute;left:0;top:0;transform:translate(-50%,-50%) rotate(90deg);font-size:13px;line-height:16px;color:#1c1c1c;white-space:pre">Notifications</div></div>
<svg style="left:1790px;top:223px" width="11" height="12"><rect x="0.5" y="0.5" width="10" height="11" fill="#f4fbff" stroke="#9aa6bf"/><circle cx="3.3" cy="3" r="1.1" fill="#1a9a1a"/><circle cx="3.3" cy="6" r="1.1" fill="#1a9a1a"/><circle cx="3.3" cy="9" r="1.1" fill="#1a9a1a"/><path d="M5.5 3H8.5M5.5 6H8.5M5.5 9H8.5" stroke="#a8b2cc"/></svg>
<div class="t" style="left:1795px;top:288.7px;width:0;height:0"><div style="position:absolute;left:0;top:0;transform:translate(-50%,-50%) rotate(90deg);font-size:13px;line-height:16px;color:#1c1c1c;white-space:pre">Context Actions 2</div></div>
<div class="t" style="left:1795px;top:407.8px;width:0;height:0"><div style="position:absolute;left:0;top:0;transform:translate(-50%,-50%) rotate(90deg);font-size:13px;line-height:16px;color:#1c1c1c;white-space:pre">Context Actions</div></div>
<div style="left:14px;top:1013px;width:1792px;height:1px;background:#d0d0d0;"></div>
<div style="left:14px;top:1014px;width:1792px;height:21px;background:#f2f2f2;"></div>
<div style="left:14px;top:1035px;width:1792px;height:1px;background:#d6d6d6;"></div>
<svg style="left:49px;top:1019px" width="10" height="14"><circle cx="2.5" cy="2.5" r="1.8" fill="#6e6e6e"/><circle cx="8" cy="3.5" r="1.8" fill="#6e6e6e"/><path d="M2.5 2V13M8 4C8 8 2.5 8 2.5 10" stroke="#6e6e6e" stroke-width="1.6" fill="none"/></svg>
<div class="t" style="left:64.6px;top:1018.50px;font-size:13px;color:#1c1c1c;font-weight:400;font-style:normal;font-family:'Liberation Sans', sans-serif;letter-spacing:-0.114px;">Version Control</div>
<svg style="left:176px;top:1020px" width="13" height="13"><circle cx="5" cy="5" r="3.8" stroke="#6e6e6e" stroke-width="1.7" fill="none"/><path d="M8 8L12 12" stroke="#6e6e6e" stroke-width="1.9"/></svg>
<div class="t" style="left:191.5px;top:1018.50px;font-size:13px;color:#1c1c1c;font-weight:400;font-style:normal;font-family:'Liberation Sans', sans-serif;letter-spacing:-1.116px;">Usages</div>
<svg style="left:252px;top:1021px" width="11" height="10"><path d="M0 1H2M0 5H2M0 9H2M3.5 1H11M3.5 5H11M3.5 9H11" stroke="#6e6e6e" stroke-width="1.4"/></svg>
<div class="t" style="left:266px;top:1018.50px;font-size:13px;color:#1c1c1c;font-weight:400;font-style:normal;font-family:'Liberation Sans', sans-serif;letter-spacing:-0.186px;">ToDo</div>
<svg style="left:317px;top:1021px" width="11" height="10"><path d="M0 1H11M0 5H8M0 9H11" stroke="#6e6e6e" stroke-width="1.4"/></svg>
<div class="t" style="left:333px;top:1018.50px;font-size:13px;color:#1c1c1c;font-weight:400;font-style:normal;font-family:'Liberation Sans', sans-serif;letter-spacing:-0.936px;">Messages</div>
<svg style="left:409px;top:1021px" width="11" height="11"><rect x="0" y="0" width="11" height="11" fill="#6e6e6e"/><path d="M2 3L5 5.5L2 8" stroke="#fff" stroke-width="1.2" fill="none"/></svg>
<div class="t" style="left:425px;top:1018.50px;font-size:13px;color:#1c1c1c;font-weight:400;font-style:normal;font-family:'Liberation Sans', sans-serif;letter-spacing:-0.701px;">Console</div>
<div class="t" style="left:489px;top:1018.50px;font-size:13px;color:#1c1c1c;font-weight:400;font-style:normal;font-family:'Liberation Sans', sans-serif;letter-spacing:-0.449px;">Chart</div>
<svg style="left:540px;top:1021px" width="11" height="11"><rect x="0" y="0" width="11" height="11" fill="#6e6e6e"/><path d="M2 3L5 5.5L2 8" stroke="#fff" stroke-width="1.2" fill="none"/></svg>
<div class="t" style="left:556px;top:1018.50px;font-size:13px;color:#1c1c1c;font-weight:400;font-style:normal;font-family:'Liberation Sans', sans-serif;letter-spacing:-0.018px;">Terminal</div>
<svg style="left:1706px;top:1020px" width="12" height="11"><path d="M2.5 0.5H9.5V4H11.5V5H0.5V4H2.5Z" fill="#6e6e6e"/><path d="M2.5 5H9.5L9 8.5H3Z" fill="#6e6e6e"/><path d="M1.5 9H10.5V11H1.5Z" fill="#6e6e6e"/></svg>
<div class="t" style="left:1722.3px;top:1018.50px;font-size:13px;color:#1c1c1c;font-weight:400;font-style:normal;font-family:'Liberation Sans', sans-serif;letter-spacing:-0.311px;">Inspector</div>
<div style="left:14px;top:1036px;width:1792px;height:26px;background:#f2f2f2;"></div>
<svg style="left:20px;top:1042px" width="13" height="13"><path d="M3.5 0.5H12.5V9.5H3.5Z" stroke="#6e6e6e" fill="none"/><path d="M0.5 3.5V12.5H9.5" stroke="#6e6e6e" fill="none"/></svg>
<div style="left:1398px;top:1036px;width:7px;height:26px;background:#a9a9a9;"></div>
<div class="t" style="left:1404.3px;top:1040.80px;font-size:15px;color:#1c1c1c;font-weight:400;font-style:normal;font-family:'Liberation Sans', sans-serif;letter-spacing:-0.284px;">1130 of 19554</div>
<svg style="left:1503px;top:1041px" width="14" height="15"><rect x="0" y="0" width="7" height="7" fill="#a8d6ec"/><rect x="7" y="3" width="7" height="7" fill="#f6c98a"/><rect x="3" y="7" width="7" height="8" fill="#d9c5f0"/><text x="1" y="6" font-size="6" fill="#555" font-family="Liberation Sans">D</text><text x="9" y="9" font-size="6" fill="#555" font-family="Liberation Sans">L</text><text x="4" y="14" font-size="6" fill="#555" font-family="Liberation Sans">S</text></svg>
<div style="left:1521px;top:1036px;width:1px;height:26px;background:#c4c4c4;"></div>
<div style="left:1534px;top:1042px;width:14px;height:14px;border-radius:3px;background:#d6c4f2"></div>
<div class="t" style="left:1534px;top:1042px;width:14px;height:14px;line-height:14px;text-align:center;font-size:9px;color:#555;font-weight:700">T</div>
<div class="t" style="left:1549px;top:1043.34px;font-size:12px;color:#1c1c1c;font-weight:400;font-style:normal;font-family:'Liberation Sans', sans-serif;letter-spacing:-0.672px;">:ON</div>
<svg style="left:1595px;top:1041px" width="15" height="16"><circle cx="10" cy="2.5" r="2" fill="#111"/><path d="M6 5L10 5L9 10L12 13M9 6L5 9L2 8M8 10L6 14L1 15M10 6L13 9L15 8" stroke="#111" stroke-width="2" fill="none"/></svg>
<div class="t" style="left:1611px;top:1043.19px;font-size:11px;color:#1c1c1c;font-weight:400;font-style:normal;font-family:'Liberation Sans', sans-serif;letter-spacing:-0.252px;">ISolvables</div>
<svg style="left:1677px;top:1043px" width="12" height="12"><circle cx="6" cy="6" r="6" fill="#c4c4c4"/><rect x="5" y="2.5" width="2" height="5" fill="#fff"/><rect x="5" y="8.5" width="2" height="1.8" fill="#fff"/></svg>
<div style="left:1695px;top:1036px;width:9px;height:26px;background:#a9a9a9;"></div>
<div style="left:1704px;top:1036px;width:22px;height:26px;background:#d6d6d6;"></div>
<div class="t" style="left:1702px;top:1040.80px;font-size:15px;color:#1c1c1c;font-weight:400;font-style:normal;font-family:'Liberation Sans', sans-serif;letter-spacing:-0.195px;">779 of 8192M</div>
</body></html>
